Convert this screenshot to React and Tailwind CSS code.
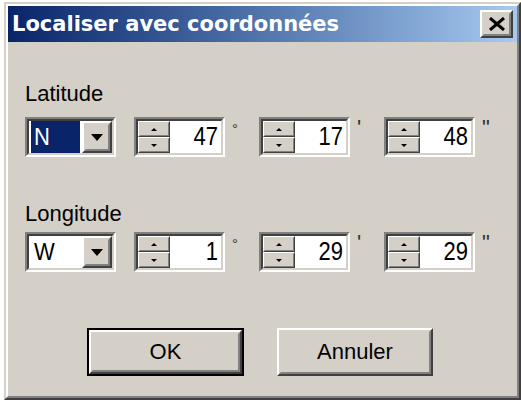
import React from 'react';

// Windows 2000 style dialog, drawn at 2x
const Sunken = ({ className, children }) => (
  <div className={`border-2 border-t-[#808080] border-l-[#808080] border-r-white border-b-white ${className}`}>
    <div className="h-full flex border-2 border-t-[#404040] border-l-[#404040] border-r-[#d4d0c8] border-b-[#d4d0c8] bg-white">
      {children}
    </div>
  </div>
);

const Raised = ({ className, children }) => (
  <div className={`border-2 border-t-white border-l-white border-r-[#404040] border-b-[#404040] bg-[#d4d0c8] ${className}`}>
    <div className="h-full flex items-center justify-center border-2 border-t-[#d4d0c8] border-l-[#d4d0c8] border-r-[#808080] border-b-[#808080]">
      {children}
    </div>
  </div>
);

const SpinButton = ({ up }) => (
  <div className="h-[16px] flex border border-t-white border-l-white border-r-[#404040] border-b-[#404040] bg-[#d4d0c8]">
    <div className="flex-1 flex items-center justify-center border border-t-[#d4d0c8] border-l-[#d4d0c8] border-r-[#808080] border-b-[#808080]">
      {up ? (
        <div className="w-0 h-0 border-l-[3px] border-r-[3px] border-b-[3px] border-l-transparent border-r-transparent border-b-black" />
      ) : (
        <div className="w-0 h-0 border-l-[3px] border-r-[3px] border-t-[3px] border-l-transparent border-r-transparent border-t-black" />
      )}
    </div>
  </div>
);

const Spinner = ({ value }) => (
  <Sunken className="w-[91px] h-[40px]">
    <div className="w-[32px] flex flex-col">
      <SpinButton up />
      <SpinButton />
    </div>
    <div className="flex-1 flex items-center justify-end pr-[3px] text-[22px] leading-none">
      <span className="inline-block scale-y-[1.15]">{value}</span>
    </div>
  </Sunken>
);

const Combo = ({ value, selected }) => (
  <Sunken className="w-[91px] h-[40px]">
    <div className="flex-1 flex pl-[2px] pr-[2px]">
      <div className={`flex-1 flex items-center pl-[3px] text-[22px] leading-none ${selected ? 'bg-[#0a246a] text-white' : 'text-black'}`}>
        <span className="inline-block scale-y-[1.1]">{value}</span>
      </div>
    </div>
    <Raised className="w-[30px] h-full">
      <div className="w-0 h-0 border-l-[6px] border-r-[6px] border-t-[7px] border-l-transparent border-r-transparent border-t-black" />
    </Raised>
  </Sunken>
);

const Unit = ({ sym, small }) => (
  <div className={`w-[34px] pl-[7px] self-start leading-[22px] text-[#333] ${small ? 'text-[15px] pt-[1px]' : 'text-[22px]'}`}>
    {sym}
  </div>
);

const CoordRow = ({ dir, selected, deg, min, sec }) => (
  <div className="flex items-center">
    <Combo value={dir} selected={selected} />
    <div className="w-[18px]" />
    <Spinner value={deg} />
    <Unit sym="°" small />
    <Spinner value={min} />
    <Unit sym="'" />
    <Spinner value={sec} />
    <Unit sym={'"'} />
  </div>
);

export default function App() {
  return (
    <div className="w-[521px] h-[400px] bg-white pt-[2px] pl-[4px] overflow-hidden" style={{ fontFamily: '"Liberation Sans", Arial, sans-serif' }}>
      <div className="w-[517px] h-[398px] border-2 border-t-[#d4d0c8] border-l-[#d4d0c8] border-r-[#404040] border-b-[#404040]">
        <div className="h-full flex flex-col border-2 border-t-white border-l-white border-r-[#808080] border-b-[#808080] bg-[#d4d0c8]">
          {/* title bar */}
          <div className="h-[36px] flex items-center justify-between pl-[4px] pr-[4px] bg-gradient-to-r from-[#0a246a] to-[#a6caf0]">
            <span className="text-white font-bold text-[21px] leading-none" style={{ fontFamily: '"DejaVu Sans", Verdana, sans-serif' }}>Localiser avec coordonnées</span>
            <Raised className="w-[33px] h-[28px]">
              <svg width="18" height="14" viewBox="0 0 18 14">
                <path d="M2 1 L16 13 M16 1 L2 13" stroke="black" strokeWidth="3" />
              </svg>
            </Raised>
          </div>

          {/* body */}
          <div className="flex flex-col pl-[17px] pt-[39px] text-black">
            <div className="text-[22px] leading-[26px]">Latitude</div>
            <div className="mt-[10px]">
              <CoordRow dir="N" selected deg="47" min="17" sec="48" />
            </div>
            <div className="mt-[44px] text-[22px] leading-[26px]">Longitude</div>
            <div className="mt-[5px]">
              <CoordRow dir="W" deg="1" min="29" sec="29" />
            </div>
          </div>

          {/* buttons */}
          <div className="flex mt-[56px] ml-[79px] gap-[33px]">
            <div className="border-2 border-black">
              <Raised className="w-[153px] h-[44px]">
                <span className="text-[22px] leading-none">OK</span>
              </Raised>
            </div>
            <Raised className="w-[156px] h-[48px]">
              <span className="text-[22px] leading-none">Annuler</span>
            </Raised>
          </div>
        </div>
      </div>
    </div>
  );
}
